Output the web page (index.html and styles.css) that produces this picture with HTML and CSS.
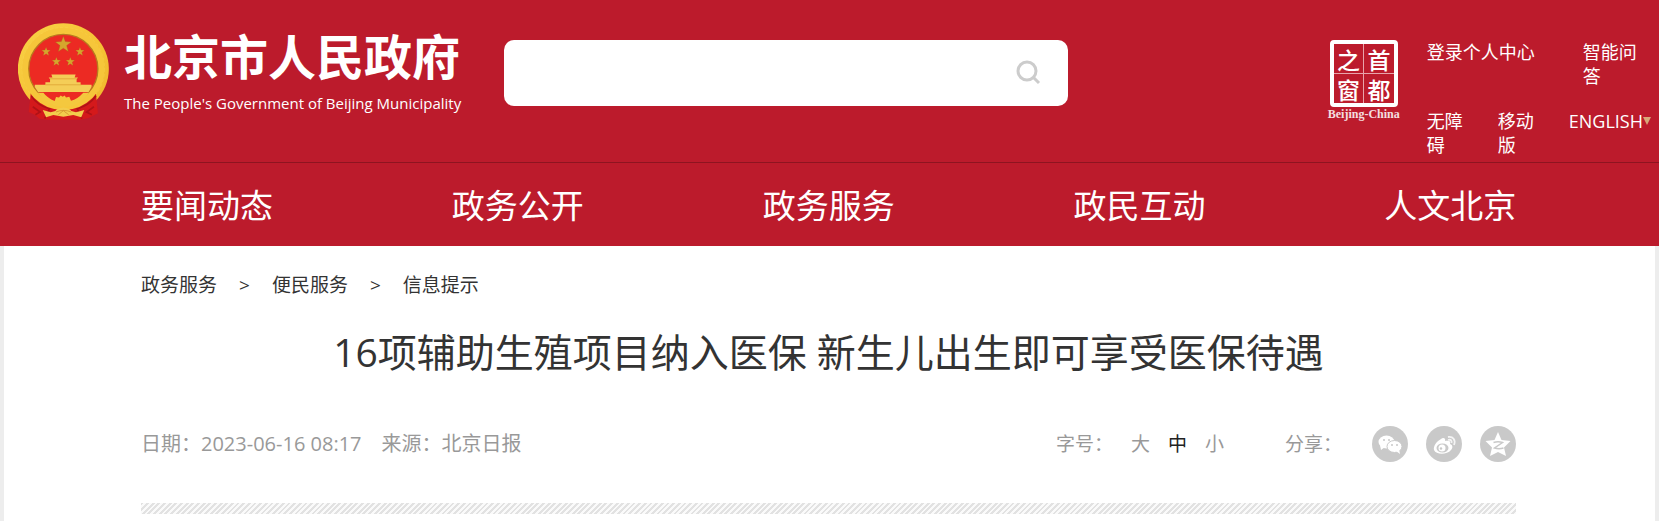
FILE: index.html
```html
<!DOCTYPE html>
<html lang="zh-CN">
<head>
<meta charset="utf-8">
<title>北京市人民政府</title>
<link rel="stylesheet" href="styles.css">
</head>
<body>
<header class="site-header">
  <div class="masthead">
    <a class="brand" href="#">
      <svg class="emblem" viewBox="24 24 276 292" aria-hidden="true">
        <defs>
          <linearGradient id="gold" x1="0" y1="0" x2="1" y2="1">
            <stop offset="0" stop-color="#f9d247"/><stop offset=".5" stop-color="#f6c436"/><stop offset="1" stop-color="#efb52c"/>
          </linearGradient>
          <path id="star" d="M0-24 6-8 24-7 10 4 15 22 0 12-15 22-10 4-24-7-6-8Z"/>
        </defs>
        <circle cx="160" cy="162" r="137" fill="url(#gold)"/>
        <circle cx="160" cy="162" r="120" fill="none" stroke="#fbdc5c" stroke-width="12" stroke-dasharray="9 6" opacity=".3"/>
        <path d="M62 234 56 292 74 300 88 312 112 315H212L236 310 264 296 258 234 238 252 196 276 160 280 122 276 82 252Z" fill="#d4191b"/>
        <path d="M64 244Q82 272 118 282L104 312M258 244Q238 272 202 282L216 312M68 276 90 292 76 300M252 276 230 292 246 300" fill="none" stroke="#b01216" stroke-width="5"/>
        <circle cx="160" cy="162" r="114" fill="none" stroke="#f6c63a" stroke-width="20"/>
        <circle cx="160" cy="162" r="104" fill="#ec2a23" stroke="#b8791e" stroke-width="4"/>
        <g fill="#d5a52d" stroke="#a85f1d" stroke-width="1">
          <use href="#star" x="160" y="88"/>
          <use href="#star" transform="translate(108 110) scale(.55)"/>
          <use href="#star" transform="translate(210 110) scale(.55)"/>
          <use href="#star" transform="translate(139 140) scale(.55)"/>
          <use href="#star" transform="translate(181 140) scale(.55)"/>
        </g>
        <path d="M124 179H197L194 188H204L200 193V202H212V210H245V217L236 232H84L74 217V210H106V202H120V193L116 188H127Z" fill="#f4cd57"/>
        <path d="M120 192H201M106 210H214" stroke="#d99a2d" stroke-width="2"/>
        <path d="M82 234Q116 276 160 277T238 234L220 234Q202 254 183 258L178 246 168 248 164 242 158 246 152 242 147 248 138 247 134 259Q112 250 100 234Z" fill="#f4c83e"/>
        <path d="M98 286 122 293 136 289Q140 280 160 278 180 280 184 289L198 293 223 286 214 308 190 301 160 306 130 301 108 308Z" fill="#f3cc4c"/>
        <path d="M138 292Q160 282 184 292M145 300 160 288 176 300" fill="none" stroke="#ca8526" stroke-width="2"/>
      </svg>
      <span class="brand-text">
        <strong class="brand-name">北京市人民政府</strong>
        <span class="brand-en">The People's Government of Beijing Municipality</span>
      </span>
    </a>
    <form class="search" role="search">
      <input class="search-input" type="search" aria-label="搜索">
      <button class="search-button" type="button" aria-label="搜索">
        <svg viewBox="0 0 26 26" aria-hidden="true"><circle cx="11" cy="11" r="9"/><path d="m17 17 6 6"/></svg>
      </button>
    </form>
    <div class="tools">
      <a class="seal" href="#">
        <span class="seal-grid"><span>之</span><span>首</span><span>窗</span><span>都</span></span>
        <span class="seal-en">Beijing-China</span>
      </a>
      <div class="links">
        <div class="links-row links-top">
          <a href="#">登录个人中心</a>
          <a class="ask" href="#">智能问答</a>
        </div>
        <div class="links-row links-bottom">
          <a class="narrow" href="#">无障碍</a>
          <a class="narrow" href="#">移动版</a>
          <a class="english" href="#">ENGLISH<span class="caret"></span></a>
        </div>
      </div>
    </div>
  </div>
  <nav class="main-nav">
    <a href="#">要闻动态</a>
    <a href="#">政务公开</a>
    <a href="#">政务服务</a>
    <a href="#">政民互动</a>
    <a href="#">人文北京</a>
  </nav>
</header>
<main class="page">
  <nav class="crumbs" aria-label="当前位置">
    <a href="#">政务服务</a><span>&gt;</span><a href="#">便民服务</a><span>&gt;</span><a href="#">信息提示</a>
  </nav>
  <h1 class="title">16项辅助生殖项目纳入医保 新生儿出生即可享受医保待遇</h1>
  <div class="meta">
    <div class="meta-info"><span>日期：2023-06-16 08:17</span><span>来源：北京日报</span></div>
    <div class="font-size">
      <span class="label">字号：</span>
      <button type="button">大</button>
      <button type="button" class="active">中</button>
      <button type="button">小</button>
    </div>
    <span class="share-label">分享：</span>
    <div class="share">
      <a href="#" aria-label="微信"><svg viewBox="0 0 36 36"><ellipse cx="14.500" cy="16" rx="8" ry="6.500"/><path d="m8 19 1 5 4-3z"/><ellipse cx="22.500" cy="20.500" rx="7.500" ry="6" stroke="#c9c9c9"/><path d="m24 25 4 3-1-5z"/><g fill="#c9c9c9"><circle cx="12" cy="14" r="1"/><circle cx="17" cy="14" r="1"/><circle cx="20" cy="19" r="1"/><circle cx="25" cy="19" r="1"/></g></svg></a>
      <a href="#" aria-label="微博"><svg viewBox="0 0 36 36"><path d="M15 13c2-2 5-1 4 2 4-1 6 0 5 3 3 1 3 4 1 6-4 5-15 5-17 0-1-4 3-9 7-11z"/><ellipse cx="16.500" cy="22" rx="6" ry="4.500" fill="#c9c9c9"/><circle cx="16" cy="22" r="3.500"/><circle cx="15" cy="22.500" r="1.200" fill="#c9c9c9"/><path d="M22 11c5-1 8 3 6 8M22 14c3-1 4 1 3.500 3" fill="none" stroke="#fff" stroke-opacity=".8" stroke-width="1.800"/></svg></a>
      <a href="#" aria-label="QQ空间"><svg viewBox="0 0 36 36"><path d="m18 6 3.500 8 9 1-6.500 6.500 2 8.500-8-4-8 4 2-8.500L5.500 15l9-1z"/><path d="M13.500 16.500c3-1 6-1 9 0l-8 5.500c3 1 6 1 9 0" fill="none" stroke="#c9c9c9" stroke-width="1.500"/></svg></a>
    </div>
  </div>
  <div class="hatch"></div>
</main>
</body>
</html>
```
FILE: styles.css
```css
* { box-sizing: border-box; }
body {
  margin: 0;
  background: #fff;
  color: #333;
  font-family: "Open Sans", "Noto Sans CJK SC", sans-serif;
  font-size: 19px;
}
a { color: inherit; text-decoration: none; }
button { border: 0; padding: 0; background: none; font: inherit; color: inherit; }

.site-header { background: #bc1b2c; color: #fff; }
.masthead {
  display: flex;
  align-items: flex-start;
  min-height: 163px;
  padding: 0 8px 0 18px;
  border-bottom: 1px solid #8e1420;
}
.brand { display: flex; gap: 14px; padding-top: 23px; flex: none; }
.emblem { width: 92px; height: 97px; }
.brand-text { display: flex; flex-direction: column; padding-top: 7px; }
.brand-name { font-size: 48px; line-height: 54px; font-weight: 700; }
.brand-en { font-size: 15px; line-height: 22px; margin-top: 8px; white-space: nowrap; }

.search {
  display: flex;
  align-items: center;
  width: 34.5%;
  height: 66px;
  margin: 40px 0 0 43px;
  padding-right: 26px;
  background: #fff;
  border-radius: 10px;
}
.search-input {
  flex: 1;
  min-width: 0;
  height: 100%;
  padding: 0 20px;
  border: 0;
  background: none;
  font: inherit;
  outline: 0;
}
.search-button { display: flex; }
.search-button svg { width: 26px; height: 26px; fill: none; stroke: #ccc; stroke-width: 3; }

.tools { display: flex; gap: 27px; margin-left: auto; padding-top: 40px; }
.seal { display: flex; flex-direction: column; align-items: center; }
.seal-grid {
  display: grid;
  grid-template-columns: 1fr 1fr;
  gap: 1px;
  width: 68px;
  height: 67px;
  border: 4px solid #fff;
  border-radius: 4px;
  background: #e8a3aa;
}
.seal-grid span {
  display: flex;
  align-items: center;
  justify-content: center;
  background: #bc1b2c;
  font-family: "Noto Sans CJK SC", sans-serif;
  font-size: 23px;
  line-height: 24px;
  font-weight: 500;
}
.seal-en { font: 700 12px/14px "Liberation Serif", serif; opacity: .85; }
.links { display: flex; flex-direction: column; gap: 21px; font-size: 18px; line-height: 24px; }
.links-row { display: flex; align-items: flex-start; }
.links-top { gap: 48px; }
.links-bottom { gap: 35px; }
.ask { width: 56px; }
.narrow { width: 36px; }
.english { display: flex; align-items: flex-start; }
.caret { margin-top: 8px; border: 4px solid transparent; border-top: 8px solid #d8a878; border-bottom: 0; }

.main-nav {
  display: flex;
  justify-content: space-between;
  padding: 19px 8.6% 16px 8.5%;
  font-size: 33px;
  line-height: 48px;
}

.page { border: solid #ededed; border-width: 0 4px; padding: 0 139px 7px 137px; }
.crumbs { display: flex; gap: 22px; padding-top: 24px; line-height: 30px; }
.title {
  margin: 22px 0 0;
  font-size: 39px;
  line-height: 60px;
  font-weight: 400;
  text-align: center;
}
.meta { display: flex; align-items: center; margin-top: 44px; color: #999; line-height: 36px; }
.meta-info { display: flex; gap: 20px; margin-right: auto; font-size: 20px; }
.font-size { display: flex; gap: 18px; margin-right: 61px; }
.active { color: #222; }
.share-label { margin-right: 30px; }
.share { display: flex; gap: 18px; }
.share a { width: 36px; height: 36px; border-radius: 50%; background: #c9c9c9; }
.share svg { display: block; fill: #fff; }
.hatch {
  height: 11px;
  margin-top: 41px;
  background: repeating-linear-gradient(135deg, #e2e2e2 0 2px, #fafafa 2px 4px);
}
```
